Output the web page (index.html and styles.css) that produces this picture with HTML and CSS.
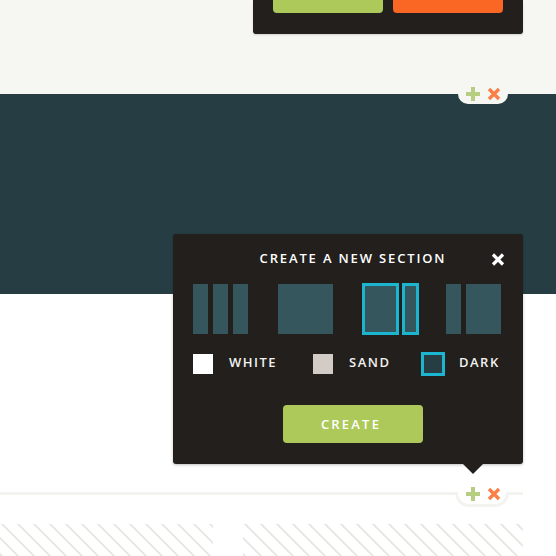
FILE: index.html
```html
<!DOCTYPE html>
<html lang="en">
<head>
<meta charset="utf-8">
<title>Create section</title>
<link rel="stylesheet" href="styles.css">
</head>
<body>
<div class="page">
  <section class="top">
    <div class="toolbar">
      <div class="tb-btn tb-green"></div>
      <div class="tb-btn tb-orange"></div>
    </div>
    <div class="pill pill-top">
      <svg class="ic" viewBox="0 0 14 14"><path d="M5 0h4v5h5v4H9v5H5V9H0V5h5z" fill="#b7cd7f"/></svg>
      <svg class="ic" viewBox="0 0 14 14"><path d="M2 2L12 12M12 2L2 12" stroke="#fb7f47" stroke-width="3.4" stroke-linecap="butt"/></svg>
    </div>
  </section>

  <section class="band">
    <div class="popup">
      <div class="pop-head">
        <span></span>
        <h2 class="pop-title">CREATE A NEW SECTION</h2>
        <button class="pop-close" aria-label="Close">
          <svg viewBox="0 0 14 13" width="14" height="13"><path d="M2 1.5L12 11.5M12 1.5L2 11.5" stroke="#fff" stroke-width="3.2"/></svg>
        </button>
      </div>
      <div class="layouts">
        <div class="layout">
          <span class="col w15"></span><span class="col w15"></span><span class="col w15"></span>
        </div>
        <div class="layout">
          <span class="col w55"></span>
        </div>
        <div class="layout selected">
          <span class="col w35"></span><span class="col w15"></span>
        </div>
        <div class="layout last">
          <span class="col w15"></span><span class="col w35"></span>
        </div>
      </div>
      <div class="colors">
        <div class="color"><span class="sw sw-white"></span><span class="cl">WHITE</span></div>
        <div class="color"><span class="sw sw-sand"></span><span class="cl">SAND</span></div>
        <div class="color"><span class="sw sw-dark active"></span><span class="cl">DARK</span></div>
      </div>
      <div class="actions">
        <button class="create">CREATE</button>
      </div>
    </div>
  </section>

  <section class="blank"></section>

  <div class="divider">
    <div class="pill pill-bottom">
      <svg class="ic" viewBox="0 0 14 14"><path d="M5 0h4v5h5v4H9v5H5V9H0V5h5z" fill="#b7cd7f"/></svg>
      <svg class="ic" viewBox="0 0 14 14"><path d="M2 2L12 12M12 2L2 12" stroke="#fb7f47" stroke-width="3.4" stroke-linecap="butt"/></svg>
    </div>
  </div>

  <section class="hatches">
    <div class="hatch"></div>
    <div class="hatch"></div>
  </section>
</div>
</body>
</html>
```

FILE: styles.css
```css
* { box-sizing: border-box; }
html, body { margin: 0; padding: 0; }
body {
  background: #ffffff;
  font-family: "Open Sans", "Liberation Sans", sans-serif;
  overflow: hidden;
}
.page { width: 556px; }

/* top section */
.top {
  position: relative;
  height: 94px;
  background: #f6f6f2;
  display: flex;
  justify-content: flex-end;
  padding-right: 33px;
}
.toolbar {
  width: 270px;
  height: 34px;
  background: #221f1d;
  border-radius: 0 0 3px 3px;
  display: flex;
  gap: 10px;
  padding: 0 20px;
  box-shadow: 0 1px 2px rgba(0,0,0,0.15);
}
.tb-btn {
  width: 110px;
  height: 13px;
  border-radius: 0 0 4px 4px;
}
.tb-green { background: #adc95a; }
.tb-orange { background: #fa6624; }

.pill {
  display: flex;
  gap: 7px;
  position: absolute;
}
.ic { width: 14px; height: 14px; display: block; }
.pill-top {
  right: 48px;
  bottom: -10px;
  width: 50px;
  height: 20px;
  background: #f6f6f2;
  border-radius: 0 0 10px 10px;
  padding: 3px 0 0 8px;
  z-index: 2;
}

/* teal band */
.band {
  position: relative;
  height: 200px;
  background: #263e43;
}
.popup {
  position: absolute;
  left: 173px;
  top: 140px;
  width: 350px;
  height: 230px;
  background: #221f1d;
  border-radius: 3px;
  padding: 13px 20px 0;
  box-shadow: 0 1px 3px rgba(0,0,0,0.25);
  z-index: 3;
  color: #fff;
}
.popup::after {
  content: "";
  position: absolute;
  left: 290px;
  bottom: -10px;
  border-left: 10px solid transparent;
  border-right: 10px solid transparent;
  border-top: 10px solid #221f1d;
}
.pop-head {
  display: grid;
  grid-template-columns: 1fr auto 1fr;
  align-items: center;
  height: 22px;
}
.pop-title {
  margin: 0;
  padding-left: 10px;
  font-size: 13px;
  font-weight: 600;
  letter-spacing: 1.85px;
  line-height: 22px;
  white-space: nowrap;
}
.pop-close {
  justify-self: end;
  margin-right: -2px;
  margin-top: 2px;
  background: none;
  border: 0;
  padding: 0;
  width: 14px;
  height: 13px;
  display: block;
}
.pop-close svg { display: block; }

.layouts {
  margin-top: 15px;
  display: flex;
  gap: 30px;
  height: 50px;
}
.layout {
  display: flex;
  gap: 5px;
  width: 55px;
}
.layout.last { margin-left: -2px; }
.col {
  display: block;
  height: 50px;
  background: #34565c;
}
.w15 { width: 15px; }
.w35 { width: 35px; }
.w55 { width: 55px; }
.layout.selected .col {
  box-shadow: 0 0 0 1px #1cb5cf, inset 0 0 0 2px #1cb5cf;
}

.colors {
  margin-top: 20px;
  display: grid;
  grid-template-columns: 120px 110px auto;
  height: 20px;
}
.color {
  display: flex;
  align-items: flex-start;
  gap: 16px;
}
.sw {
  width: 20px;
  height: 20px;
  display: block;
  flex: none;
}
.sw-white { background: #ffffff; }
.sw-sand { background: #d3cbc5; }
.sw-dark { background: #263e43; }
.sw.active { box-shadow: 0 0 0 2px #1cb5cf, inset 0 0 0 1px #1cb5cf; }
.cl {
  font-size: 13px;
  font-weight: 600;
  letter-spacing: 1.5px;
  color: #f2f2f0;
  line-height: 16px;
}

.actions {
  margin-top: 31px;
  display: flex;
  justify-content: center;
  padding-left: 10px;
}
.create {
  width: 140px;
  height: 38px;
  background: #adc95a;
  border: 0;
  border-radius: 4px;
  color: #fff;
  font-family: inherit;
  font-size: 13px;
  font-weight: 600;
  letter-spacing: 2.2px;
  padding: 0 4px 1px 0;
}

.blank { height: 198px; background: #fff; }

.divider {
  position: relative;
  height: 3px;
  width: 523px;
  background: #f3f3ef;
}
.pill-bottom {
  right: 14px;
  top: 0;
  width: 54px;
  height: 15px;
  background: #fff;
  border: 3px solid #f3f3ef;
  border-top: 0;
  border-radius: 0 0 14px 14px;
  padding-left: 8px;
}
.pill-bottom .ic { margin-top: -5px; }

.hatches {
  margin-top: 29px;
  display: grid;
  grid-template-columns: 213px 280px;
  column-gap: 30px;
}
.hatch {
  height: 60px;
  background: repeating-linear-gradient(45deg, #ffffff 0 9px, #e9e9e6 9px 11.3px);
}
```
